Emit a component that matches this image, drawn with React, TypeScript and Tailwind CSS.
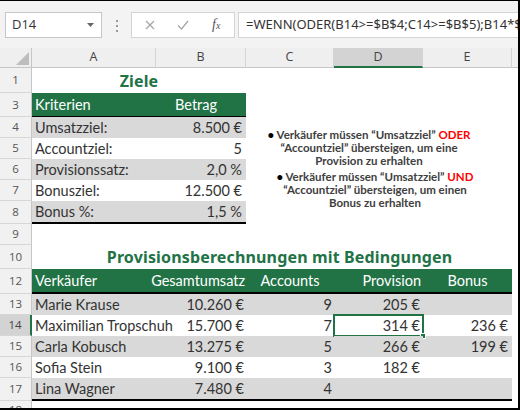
import React from 'react';

// column widths A..E (row header is 32px)
const W = ['w-[124px]', 'w-[90px]', 'w-[88px]', 'w-[89px]', 'w-[89px]'];
const GRAY = 'bg-[#d9d9d9]';

const sales = [
  ['Marie Krause', '10.260 €', '9', '205 €', ''],
  ['Maximilian Tropschuh', '15.700 €', '7', '314 €', '236 €'],
  ['Carla Kobusch', '13.275 €', '5', '266 €', '199 €'],
  ['Sofia Stein', '9.100 €', '3', '182 €', ''],
  ['Lina Wagner', '7.480 €', '4', '', ''],
];

const goals = [
  ['4', 'Umsatzziel:', '8.500 €'],
  ['5', 'Accountziel:', '5'],
  ['6', 'Provisionssatz:', '2,0 %'],
  ['7', 'Bonusziel:', '12.500 €'],
  ['8', 'Bonus %:', '1,5 %'],
];

function RowHead({ n, active = false }: { n: string; active?: boolean }) {
  return (
    <div
      className={`w-[32px] shrink-0 flex items-center justify-center border-b border-b-[#d6d6d6] font-['Open_Sans',sans-serif] text-[11.5px] ${
        active
          ? 'bg-[#d3d3d3] text-[#444] border-r-2 border-r-[#217346]'
          : 'bg-[#f1f1f1] text-[#555] border-r border-r-[#c6c6c6]'
      }`}
    >
      {n}
    </div>
  );
}

function Cell({ w, className = '', children }: { w: string; className?: string; children?: React.ReactNode }) {
  return <div className={`${w} shrink-0 flex items-center whitespace-nowrap ${className}`}>{children}</div>;
}

function FormulaBar() {
  return (
    <div className="h-[47px] shrink-0 bg-[#f3f3f3] flex items-start pt-[11px]">
      <div className="ml-[5px] w-[97px] h-[26px] bg-white border border-[#c6c6c6] flex items-center justify-between pl-[6px] pr-[7px]">
        <span className="font-['Open_Sans',sans-serif] text-[13px] text-[#333]">D14</span>
        <svg width="7" height="4" viewBox="0 0 7 4">
          <polygon points="0,0 7,0 3.5,4" fill="#666" />
        </svg>
      </div>
      <div className="ml-[14px] mt-[8px] flex flex-col gap-[3px]">
        <span className="w-[2px] h-[2px] bg-[#9a9a9a]" />
        <span className="w-[2px] h-[2px] bg-[#9a9a9a]" />
        <span className="w-[2px] h-[2px] bg-[#9a9a9a]" />
      </div>
      <div className="ml-[13px] w-[104px] h-[26px] bg-white border border-[#d4d4d4] flex items-center">
        <svg className="ml-[13px]" width="10" height="10" viewBox="0 0 10 10">
          <path d="M1 1 L9 9 M9 1 L1 9" stroke="#a6a6a6" strokeWidth="1.3" />
        </svg>
        <svg className="ml-[22px]" width="12" height="10" viewBox="0 0 12 10">
          <path d="M1 5.5 L4.5 9 L11 1" stroke="#a6a6a6" strokeWidth="1.3" fill="none" />
        </svg>
        <span className="ml-[23px] font-['Liberation_Serif',serif] italic text-[14px] text-[#555] leading-none">
          f<span className="text-[10px]">x</span>
        </span>
      </div>
      <div className="ml-[3px] flex-1 h-[26px] bg-white border border-[#d4d4d4] border-r-0 flex items-center pl-[7px] overflow-hidden">
        <span className="font-['Noto_Sans',sans-serif] text-[13px] text-[#333] whitespace-nowrap">
          =WENN(ODER(B14&gt;=$B$4;C14&gt;=$B$5);B14*$B$6;0)
        </span>
      </div>
    </div>
  );
}

function ColumnHeaders() {
  const letters = ['A', 'B', 'C', 'D', 'E'];
  return (
    <div className="flex h-[20px] shrink-0 bg-[#efefef] font-['Open_Sans',sans-serif] text-[12.5px] text-[#444]">
      <div className="w-[32px] shrink-0 border-r border-b border-[#c6c6c6] flex items-end justify-end pr-[2px] pb-[2px]">
        <svg width="13" height="13" viewBox="0 0 13 13">
          <polygon points="13,0 13,13 0,13" fill="#bdbdbd" />
        </svg>
      </div>
      {letters.map((l, i) => (
        <div
          key={l}
          className={`${W[i]} shrink-0 flex items-center justify-center border-r border-r-[#d4d4d4] ${
            l === 'D' ? 'bg-[#d3d3d3] border-b-2 border-b-[#217346]' : 'border-b border-b-[#c6c6c6]'
          }`}
        >
          {l}
        </div>
      ))}
      <div className="flex-1 border-b border-b-[#c6c6c6]" />
    </div>
  );
}

const title = "justify-center font-['Noto_Sans',sans-serif] font-bold text-[16px] tracking-[0.15px] text-[#217346]";

export default function App() {
  return (
    <div className="relative w-[520px] h-[410px] overflow-hidden bg-white border-t border-r-2 border-b-2 border-black flex flex-col font-['Lato',sans-serif] text-[14.5px] text-[#333]">
      <FormulaBar />
      <ColumnHeaders />

      {/* row 1 */}
      <div className="flex h-[25px] shrink-0">
        <RowHead n="1" />
        <Cell w="w-[214px]" className={title}>
          Ziele
        </Cell>
      </div>

      {/* row 3 */}
      <div className="flex h-[24px] shrink-0">
        <RowHead n="3" />
        <Cell w={W[0]} className="bg-[#217346] text-white pl-[3px] border-b border-black">
          Kriterien
        </Cell>
        <Cell w={W[1]} className="bg-[#217346] text-white justify-end pr-[29px] border-b border-black">
          Betrag
        </Cell>
      </div>

      {goals.map(([n, label, val], i) => {
        const last = i === goals.length - 1;
        const fill = i % 2 === 0 ? GRAY : 'bg-white';
        return (
          <div key={n} className={`flex shrink-0 ${last ? 'h-[23px]' : 'h-[21px]'}`}>
            <RowHead n={n} />
            <Cell w={W[0]} className={`${fill} pl-[3px] ${last ? 'border-b-2 border-black' : ''}`}>
              {label}
            </Cell>
            <Cell w={W[1]} className={`${fill} justify-end pr-[4px] ${last ? 'border-b-2 border-black' : ''}`}>
              {val}
            </Cell>
          </div>
        );
      })}

      {/* row 9 */}
      <div className="flex h-[21px] shrink-0">
        <RowHead n="9" />
      </div>

      {/* row 10 */}
      <div className="flex h-[24px] shrink-0">
        <RowHead n="10" />
        <Cell w="w-[495px]" className={title}>
          Provisionsberechnungen mit Bedingungen
        </Cell>
      </div>

      {/* row 12 */}
      <div className="flex h-[25px] shrink-0">
        <RowHead n="12" />
        <Cell w={W[0]} className="bg-[#217346] text-white pl-[3px] border-b-2 border-black">
          Verkäufer
        </Cell>
        <Cell w={W[1]} className="bg-[#217346] text-white justify-end pr-[1px] border-b-2 border-black">
          Gesamtumsatz
        </Cell>
        <Cell w={W[2]} className="bg-[#217346] text-white justify-center border-b-2 border-black">
          Accounts
        </Cell>
        <Cell w={W[3]} className="bg-[#217346] text-white justify-end pr-[2px] border-b-2 border-black">
          Provision
        </Cell>
        <Cell w={W[4]} className="bg-[#217346] text-white justify-center border-b-2 border-black">
          Bonus
        </Cell>
      </div>

      {sales.map((r, i) => {
        const last = i === sales.length - 1;
        const fill = i % 2 === 0 ? GRAY : 'bg-white';
        const b = last ? 'border-b-2 border-black' : '';
        return (
          <div key={r[0]} className={`flex shrink-0 ${last ? 'h-[23px]' : 'h-[21px]'}`}>
            <RowHead n={String(13 + i)} active={i === 1} />
            <Cell w={W[0]} className={`${fill} ${b} pl-[3px]`}>
              <span className="relative z-[1]">{r[0]}</span>
            </Cell>
            <Cell w={W[1]} className={`${fill} ${b} justify-end pr-[2px]`}>{r[1]}</Cell>
            <Cell w={W[2]} className={`${fill} ${b} justify-end pr-[2px]`}>{r[2]}</Cell>
            <Cell w={W[3]} className={`${fill} ${b} justify-end pr-[3px] relative`}>
              {r[3]}
              {i === 1 && (
                <>
                  <span className="absolute -inset-[1px] border-2 border-[#217346]" />
                  <span className="absolute -right-[3px] -bottom-[3px] w-[6px] h-[6px] bg-[#217346] border border-white" />
                </>
              )}
            </Cell>
            <Cell w={W[4]} className={`${fill} ${b} justify-end pr-[4px]`}>{r[4]}</Cell>
          </div>
        );
      })}

      {/* row 18 */}
      <div className="flex flex-1">
        <RowHead n="18" />
      </div>

      {/* floating text box */}
      <div className="absolute left-[259px] top-[127px] w-[220px] text-center font-bold text-[11.5px] leading-[13px] text-[#404040]">
        <span className="text-black">•</span> Verkäufer müssen “Umsatzziel” <span className="text-[#ff0000]">ODER</span>
        <br />
        “Accountziel” übersteigen, um eine
        <br />
        Provision zu erhalten
      </div>
      <div className="absolute left-[265px] top-[169px] w-[220px] text-center font-bold text-[11.5px] leading-[13px] text-[#404040]">
        <span className="text-black">•</span> Verkäufer müssen “Umsatzziel” <span className="text-[#ff0000]">UND</span>
        <br />
        “Accountziel” übersteigen, um einen
        <br />
        Bonus zu erhalten
      </div>
    </div>
  );
}
